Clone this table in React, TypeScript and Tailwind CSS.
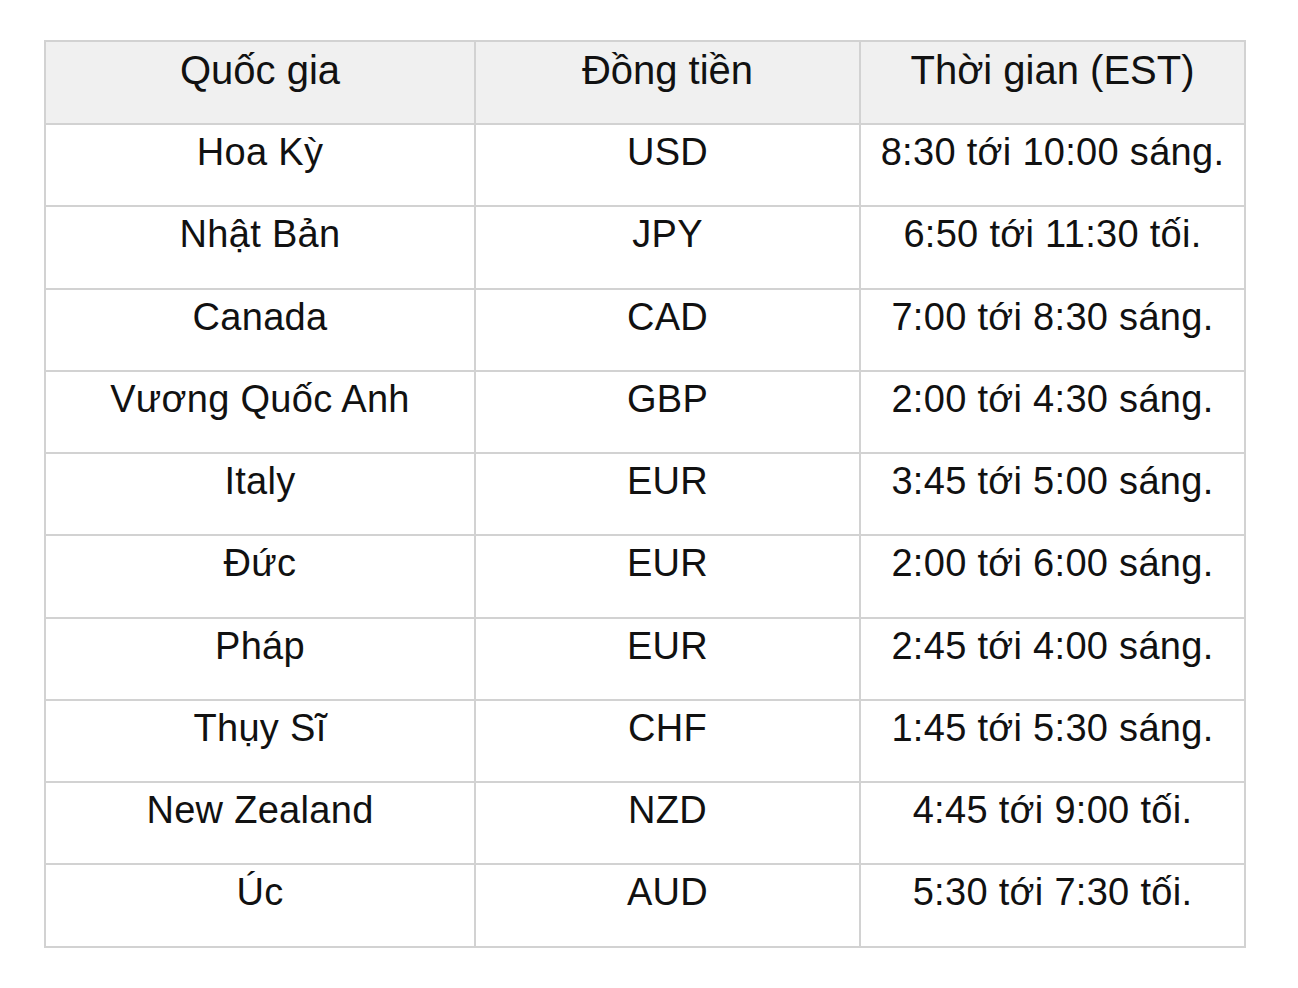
import React from "react";

const rows: [string, string, string][] = [
  ["Hoa Kỳ", "USD", "8:30 tới 10:00 sáng."],
  ["Nhật Bản", "JPY", "6:50 tới 11:30 tối."],
  ["Canada", "CAD", "7:00 tới 8:30 sáng."],
  ["Vương Quốc Anh", "GBP", "2:00 tới 4:30 sáng."],
  ["Italy", "EUR", "3:45 tới 5:00 sáng."],
  ["Đức", "EUR", "2:00 tới 6:00 sáng."],
  ["Pháp", "EUR", "2:45 tới 4:00 sáng."],
  ["Thụy Sĩ", "CHF", "1:45 tới 5:30 sáng."],
  ["New Zealand", "NZD", "4:45 tới 9:00 tối."],
  ["Úc", "AUD", "5:30 tới 7:30 tối."],
];

const heights = [
  "h-[80px]",
  "h-[81px]",
  "h-[80px]",
  "h-[80px]",
  "h-[80px]",
  "h-[81px]",
  "h-[80px]",
  "h-[80px]",
  "h-[80px]",
  "h-[81px]",
];

export default function App() {
  return (
    <div className="w-[1298px] h-[988px] bg-white pt-[40px] pl-[44px]" style={{ fontFamily: '"Liberation Sans", Arial, sans-serif' }}>
      <div className="w-[1202px] grid grid-cols-[428px_383px_383px] gap-[2px] p-[2px] bg-[#d2d2d2] leading-[44px] text-[#111]">
        {["Quốc gia", "Đồng tiền", "Thời gian (EST)"].map((h) => (
          <div key={h} className="h-[81px] bg-[#f0f0f0] text-center pt-[6px] text-[40px]">
            {h}
          </div>
        ))}
        {rows.map((r, i) =>
          r.map((c, j) => (
            <div key={i + "-" + j} className={`${heights[i]} bg-white text-center pt-[5px] whitespace-nowrap text-[38px] tracking-[0.3px]`}>
              {c}
            </div>
          ))
        )}
      </div>
    </div>
  );
}
